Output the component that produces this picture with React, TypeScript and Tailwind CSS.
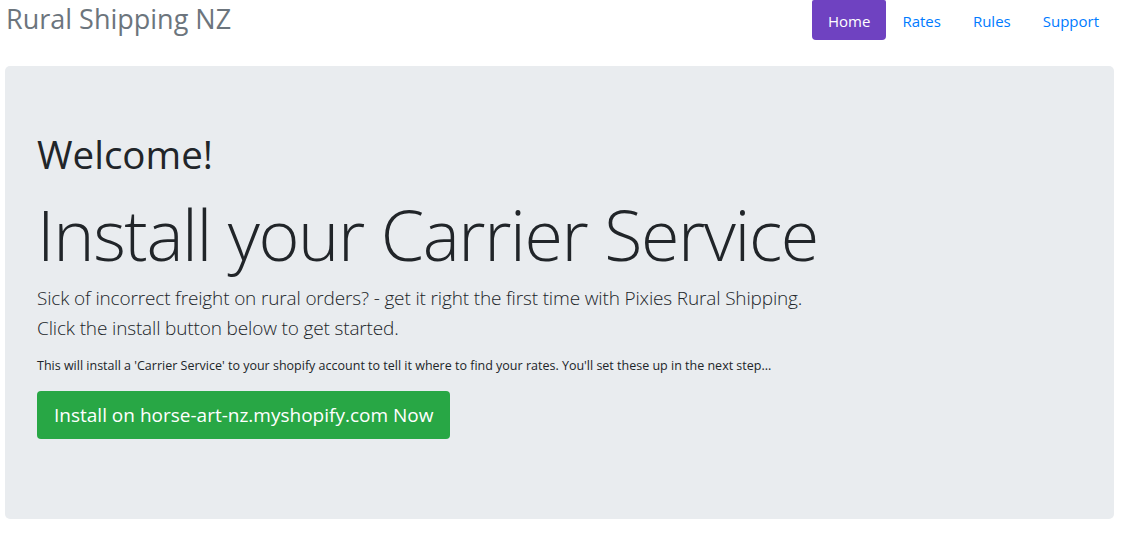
import React from "react"

const links = ["Rates", "Rules", "Support"]

function Header() {
  return (
    <div className="flex h-[40px] items-start justify-between pl-[6px] pr-[6px]">
      <h3 className="mt-[1px] text-[27px] leading-[36px] text-[#6c757d]">Rural Shipping NZ</h3>
      <nav className="flex text-[15px] leading-[24px]">
        <a className="rounded-b-[4px] rounded-t-[2px] bg-[#6f42c1] px-[16px] pt-[9px] pb-[7px] text-white">Home</a>
        {links.map((l) => (
          <a key={l} className="px-[16px] pt-[9px] pb-[7px] text-[#007bff]">
            {l}
          </a>
        ))}
      </nav>
    </div>
  )
}

export default function App() {
  return (
    <div className="min-h-[538px] bg-white font-['Open_Sans','Noto_Sans',sans-serif] text-[#212529]">
      <Header />
      <div className="mx-[5px] mt-[26px] mr-[7px] rounded-[5px] bg-[#e9ecef] px-[32px] py-[64px]">
        <h1 className="mb-[8px] text-[38.5px] leading-[48px]">Welcome!</h1>
        <h2 className="mb-[5px] pt-[4px] text-[70px] font-light leading-[88px] tracking-[-1.4px]">
          Install your Carrier Service
        </h2>
        <p className="text-[19px] font-light leading-[30px] tracking-[-0.15px]">
          Sick of incorrect freight on rural orders? - get it right the first time with Pixies Rural Shipping.
          <br />
          Click the install button below to get started.
        </p>
        <p className="mt-[13px] mb-[16px] text-[12.5px] leading-[19px]">
          This will install a 'Carrier Service' to your shopify account to tell it where to find your rates. You'll set these up in the next step...
        </p>
        <p className="mb-[16px]">
          <button className="h-[48px] rounded-[4px] bg-[#28a745] px-[17px] text-[19px] leading-[30px] text-white">
            Install on horse-art-nz.myshopify.com Now
          </button>
        </p>
      </div>
    </div>
  )
}
